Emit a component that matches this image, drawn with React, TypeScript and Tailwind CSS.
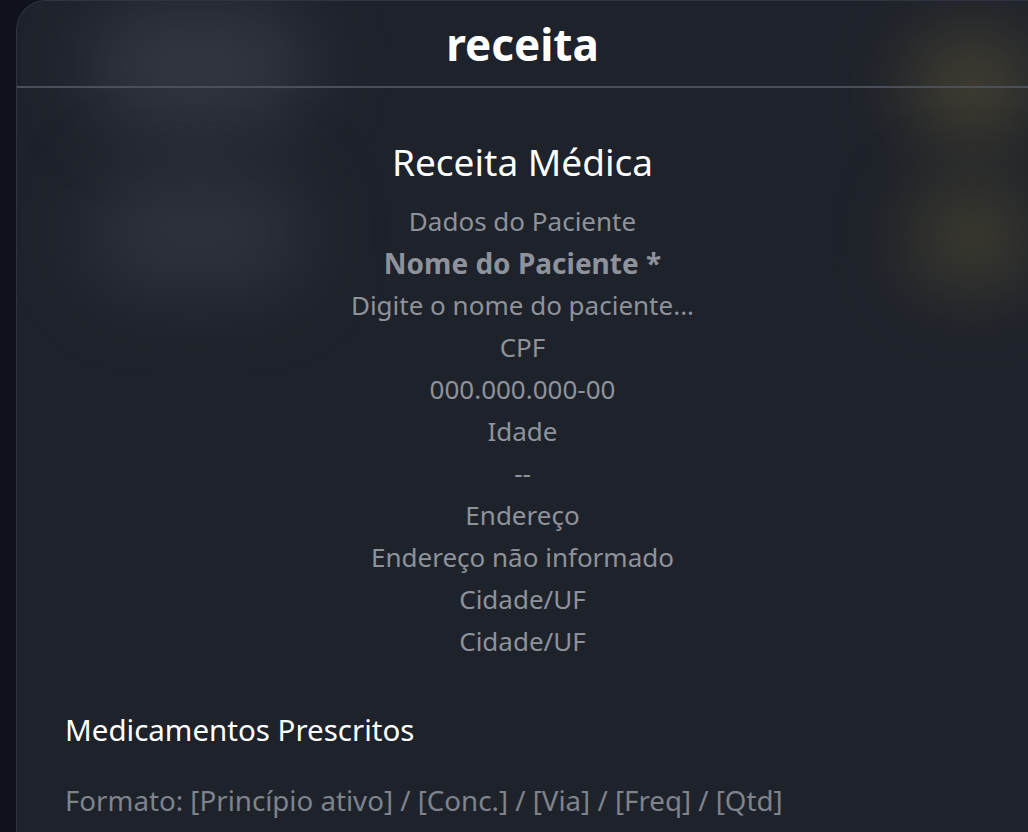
import React from "react";

const rows: { text: string; bold?: boolean }[] = [
  { text: "Dados do Paciente" },
  { text: "Nome do Paciente *", bold: true },
  { text: "Digite o nome do paciente..." },
  { text: "CPF" },
  { text: "000.000.000-00" },
  { text: "Idade" },
  { text: "--" },
  { text: "Endereço" },
  { text: "Endereço não informado" },
  { text: "Cidade/UF" },
  { text: "Cidade/UF" },
];

export default function App() {
  return (
    <div
      className="h-[832px] overflow-hidden bg-[#0f121a] pl-4"
      style={{ fontFamily: '"Noto Sans", "Open Sans", sans-serif' }}
    >
      <div className="relative h-full overflow-hidden rounded-tl-[30px] border-l border-t border-[#2f3440] bg-[#1e222a]">
        {/* background glows */}
        <div className="pointer-events-none absolute left-[70px] top-[5px] h-[120px] w-[220px] rounded-full bg-[#454a55] opacity-55 blur-[40px]" />
        <div className="pointer-events-none absolute left-[70px] top-[170px] h-[120px] w-[220px] rounded-full bg-[#40444e] opacity-50 blur-[40px]" />
        <div className="pointer-events-none absolute left-[890px] top-[30px] h-[110px] w-[130px] rounded-full bg-[#5a5236] opacity-60 blur-[36px]" />
        <div className="pointer-events-none absolute left-[890px] top-[180px] h-[110px] w-[130px] rounded-full bg-[#565034] opacity-55 blur-[36px]" />

        <div className="relative flex h-[87px] items-center justify-center border-b-2 border-[#4b4f59]">
          <h1 className="text-[44px] font-bold leading-none text-white">receita</h1>
        </div>

        <div className="relative flex flex-col items-center pt-[50px]">
          <h2 className="text-[37px] leading-[48px] text-white">Receita Médica</h2>
          <div className="mt-[14px] flex flex-col items-center text-[26px] leading-[42px] text-[#8e929b]">
            {rows.map((r, i) => (
              <div key={i} className={r.bold ? "text-[28px] font-bold" : ""}>
                {r.text}
              </div>
            ))}
          </div>
        </div>

        <div className="relative px-12 pt-[48px]">
          <h3 className="text-[29.5px] leading-[40px] text-white">Medicamentos Prescritos</h3>
          <p className="mt-[30px] text-[27.7px] leading-[40px] text-[#7f838c]">
            Formato: [Princípio ativo] / [Conc.] / [Via] / [Freq] / [Qtd]
          </p>
        </div>
      </div>
    </div>
  );
}
